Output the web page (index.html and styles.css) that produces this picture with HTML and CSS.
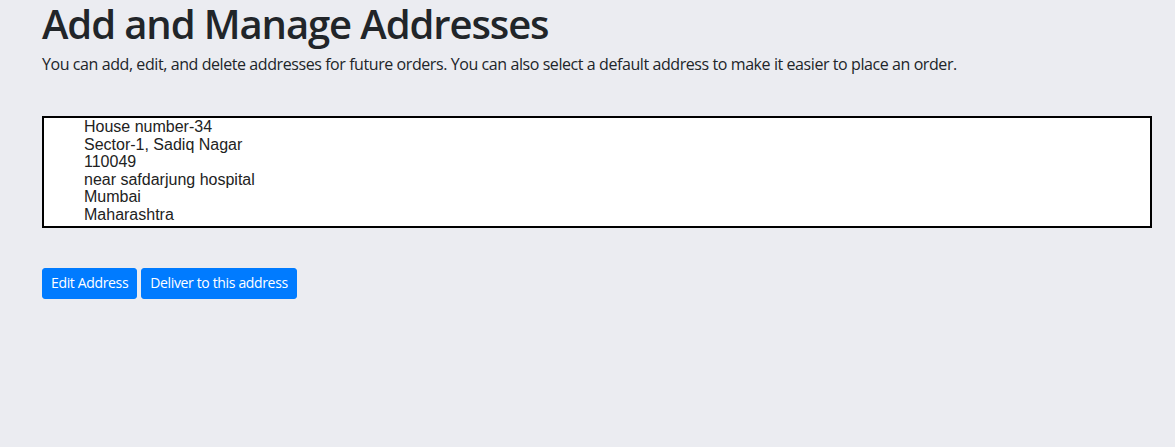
FILE: index.html
```html
<!DOCTYPE html>
<html>
<head>
<meta charset="utf-8">
<link rel="stylesheet" href="styles.css">
</head>
<body>
<div class="page">
  <h1 class="title">Add and Manage Addresses</h1>
  <p class="lead">You can add, edit, and delete addresses for future orders. You can also select a default address to make it easier to place an order.</p>
  <div class="address">
    <div>House number-34</div>
    <div>Sector-1, Sadiq Nagar</div>
    <div>110049</div>
    <div>near safdarjung hospital</div>
    <div>Mumbai</div>
    <div>Maharashtra</div>
  </div>
  <div class="actions">
    <button class="btn">Edit Address</button>
    <button class="btn">Deliver to this address</button>
  </div>
</div>
</body>
</html>
```

FILE: styles.css
```css
html, body {
  margin: 0;
  padding: 0;
  background: #ebecf1;
}
body {
  font-family: "Open Sans", "Noto Sans", sans-serif;
  color: #212529;
}
.page {
  padding-left: 42px;
  width: 1110px;
}
.title {
  margin: 0;
  font-size: 40px;
  line-height: 48px;
  font-weight: 600;
  letter-spacing: -1.1px;
}
.lead {
  margin: 4px 0 0 0;
  font-size: 16px;
  line-height: 24px;
  letter-spacing: -0.42px;
}
.address {
  margin-top: 40px;
  border: 2px solid #000;
  background: #fff;
  padding: 0 0 2px 40px;
  font-family: "Liberation Sans", Arial, sans-serif;
  font-size: 16px;
  line-height: 17.6px;
  color: #222;
  letter-spacing: 0;
}
.actions {
  margin-top: 40px;
  display: flex;
  gap: 4px;
}
.btn {
  font-family: "Open Sans", "Noto Sans", sans-serif;
  font-size: 14px;
  line-height: 20px;
  padding: 4px 8px;
  height: 31px;
  color: #fff;
  background: #007bff;
  border: 1px solid #007bff;
  border-radius: 3px;
  letter-spacing: -0.35px;
}
```
